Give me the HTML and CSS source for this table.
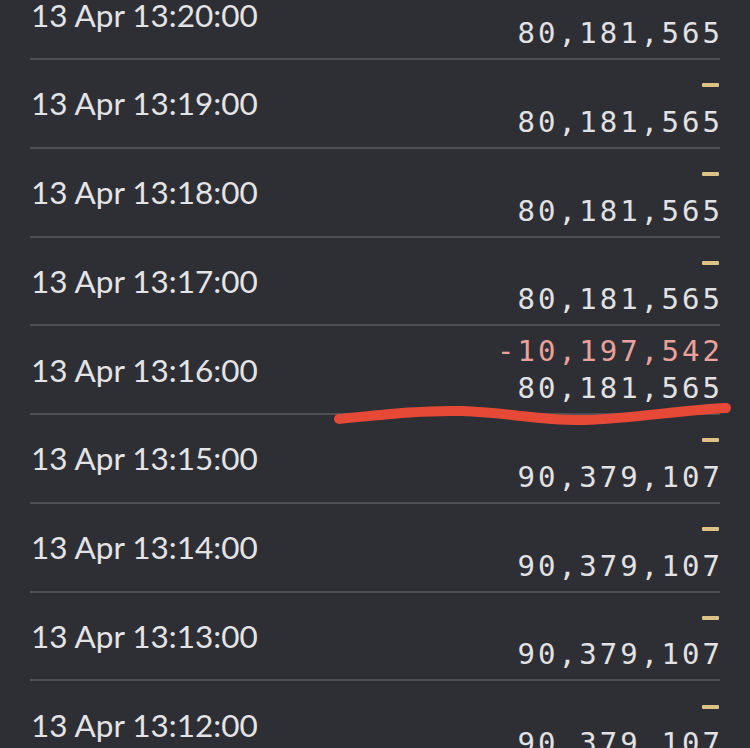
FILE: index.html
```html
<!DOCTYPE html>
<html>
<head>
<meta charset="utf-8">
<link rel="stylesheet" href="styles.css">
</head>
<body>
<div class="screen">
  <div class="list">
    <div class="row">
      <div class="date">13 Apr 13:20:00</div>
      <div class="vals"><div class="delta"><span class="dash"></span></div><div class="value">80,181,565</div></div>
    </div>
    <div class="row">
      <div class="date">13 Apr 13:19:00</div>
      <div class="vals"><div class="delta"><span class="dash"></span></div><div class="value">80,181,565</div></div>
    </div>
    <div class="row">
      <div class="date">13 Apr 13:18:00</div>
      <div class="vals"><div class="delta"><span class="dash"></span></div><div class="value">80,181,565</div></div>
    </div>
    <div class="row">
      <div class="date">13 Apr 13:17:00</div>
      <div class="vals"><div class="delta"><span class="dash"></span></div><div class="value">80,181,565</div></div>
    </div>
    <div class="row">
      <div class="date">13 Apr 13:16:00</div>
      <div class="vals"><div class="delta neg">-10,197,542</div><div class="value">80,181,565</div></div>
    </div>
    <div class="row">
      <div class="date">13 Apr 13:15:00</div>
      <div class="vals"><div class="delta"><span class="dash"></span></div><div class="value">90,379,107</div></div>
    </div>
    <div class="row">
      <div class="date">13 Apr 13:14:00</div>
      <div class="vals"><div class="delta"><span class="dash"></span></div><div class="value">90,379,107</div></div>
    </div>
    <div class="row">
      <div class="date">13 Apr 13:13:00</div>
      <div class="vals"><div class="delta"><span class="dash"></span></div><div class="value">90,379,107</div></div>
    </div>
    <div class="row">
      <div class="date">13 Apr 13:12:00</div>
      <div class="vals"><div class="delta"><span class="dash"></span></div><div class="value">90,379,107</div></div>
    </div>
  </div>
  <svg class="scribble" width="750" height="748" viewBox="0 0 750 748">
    <path d="M339,419 C380,415 420,410 462,411 C505,412 540,421 585,420 C630,419 680,410 726,408" fill="none" stroke="#e64a37" stroke-width="10" stroke-linecap="round"/>
  </svg>
</div>
</body>
</html>
```
FILE: styles.css
```css
html, body {
  margin: 0;
  padding: 0;
  background: #2e2f34;
}
.screen {
  position: relative;
  width: 750px;
  height: 748px;
  overflow: hidden;
  background: #2e2f34;
}
.list {
  margin-top: -28.75px;
  padding: 0 30px;
}
.row {
  box-sizing: border-box;
  height: 88.75px;
  border-bottom: 2px solid #4f5056;
  display: flex;
  align-items: center;
  justify-content: space-between;
}
.date {
  font-family: Lato, "Open Sans", sans-serif;
  font-size: 31.5px;
  color: #e4e4e6;
  padding-left: 1px;
}
.vals {
  display: flex;
  flex-direction: column;
  align-items: flex-end;
  font-family: "DejaVu Sans Mono", "Liberation Mono", monospace;
  font-size: 29px;
  letter-spacing: 3.1px;
  margin-right: -3.1px;
  padding-top: 1px;
}
.delta {
  height: 37px;
  line-height: 37px;
  display: flex;
  align-items: center;
}
.neg {
  color: #eba19b;
}
.dash {
  display: block;
  width: 17px;
  height: 4px;
  border-radius: 1px;
  background: #dcc383;
  margin-right: 4px;
}
.value {
  line-height: 37px;
  color: #e2e2e4;
}
.scribble {
  position: absolute;
  left: 0;
  top: 0;
}
```
